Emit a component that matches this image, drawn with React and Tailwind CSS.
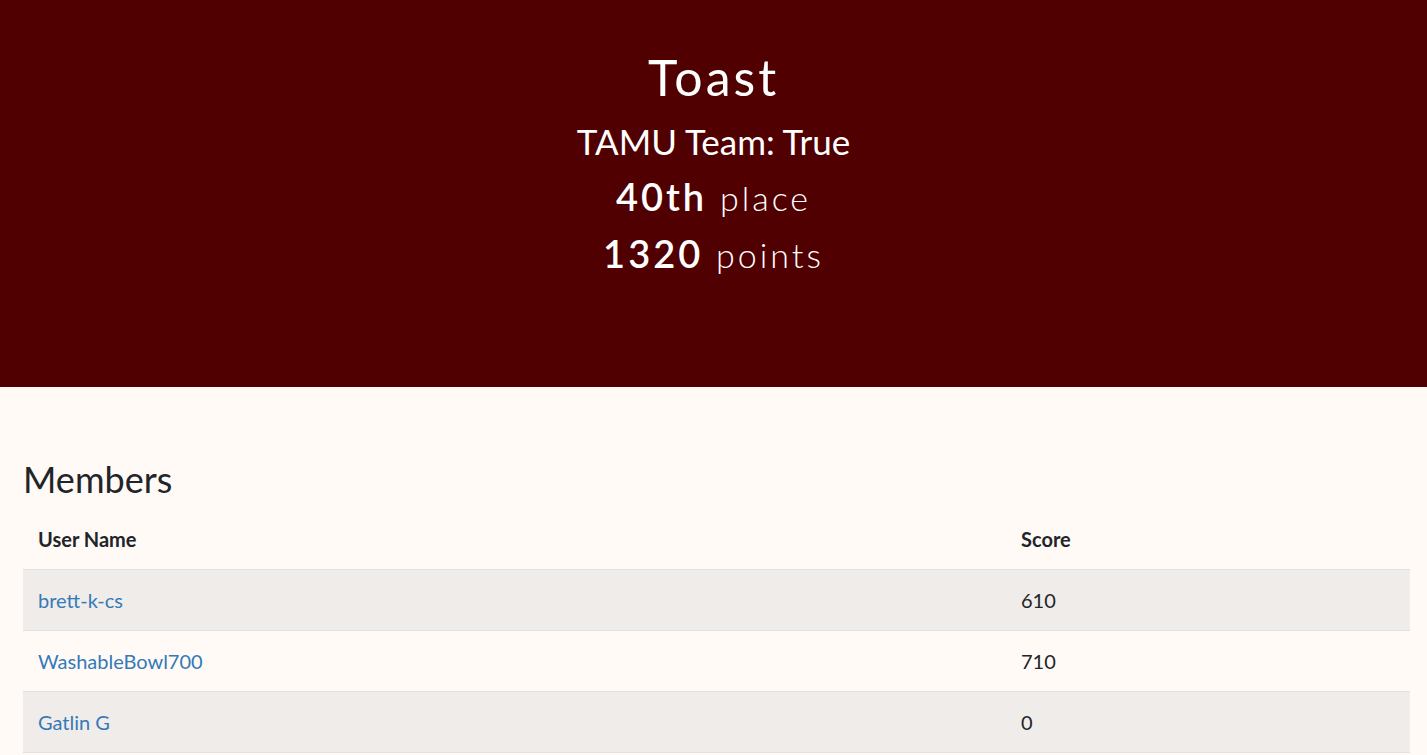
import React from 'react';

const members = [
  { name: 'brett-k-cs', score: 610 },
  { name: 'WashableBowl700', score: 710 },
  { name: 'Gatlin G', score: 0 },
];

export default function App() {
  return (
    <div className="min-h-screen bg-[#fffaf6] font-['Lato','Noto_Sans',sans-serif] text-[#212529]">
      {/* banner */}
      <header className="h-[387px] bg-[#500000] text-white flex flex-col items-center pt-[46px]">
        <h1 className="text-[50px] leading-[62px] font-normal tracking-[3px]">Toast</h1>
        <p className="text-[35px] leading-[46px] mt-[10px]">TAMU Team: True</p>
        <p className="mt-[7px] text-[38px] leading-[50px] tracking-[3px]">
          <span className="font-semibold">40th</span> <span className="font-light text-[34px]">place</span>
        </p>
        <p className="mt-[5px] text-[38px] leading-[50px] tracking-[3px]">
          <span className="font-semibold">1320</span> <span className="font-light text-[34px]">points</span>
        </p>
      </header>

      <section className="pl-[23px] pr-[17px] pt-[70px]">
        <h2 className="text-[36px] leading-[44px] font-normal mb-[8px]">Members</h2>
        <table className="w-full border-collapse text-[20px]">
          <thead>
            <tr className="border-b border-[#dee2e6]">
              <th className="w-[983px] text-left font-bold px-[15px] h-[60px]">User Name</th>
              <th className="text-left font-bold px-[15px] h-[60px]">Score</th>
            </tr>
          </thead>
          <tbody>
            {members.map((m, i) => (
              <tr key={m.name} className={`border-b border-[#dee2e6] ${i % 2 === 0 ? 'bg-[#f0ecea]' : ''}`}>
                <td className="px-[15px] h-[61px]">
                  <a href="#" className="text-[#337ab7]">{m.name}</a>
                </td>
                <td className="px-[15px] h-[61px]">{m.score}</td>
              </tr>
            ))}
          </tbody>
        </table>
      </section>
    </div>
  );
}
